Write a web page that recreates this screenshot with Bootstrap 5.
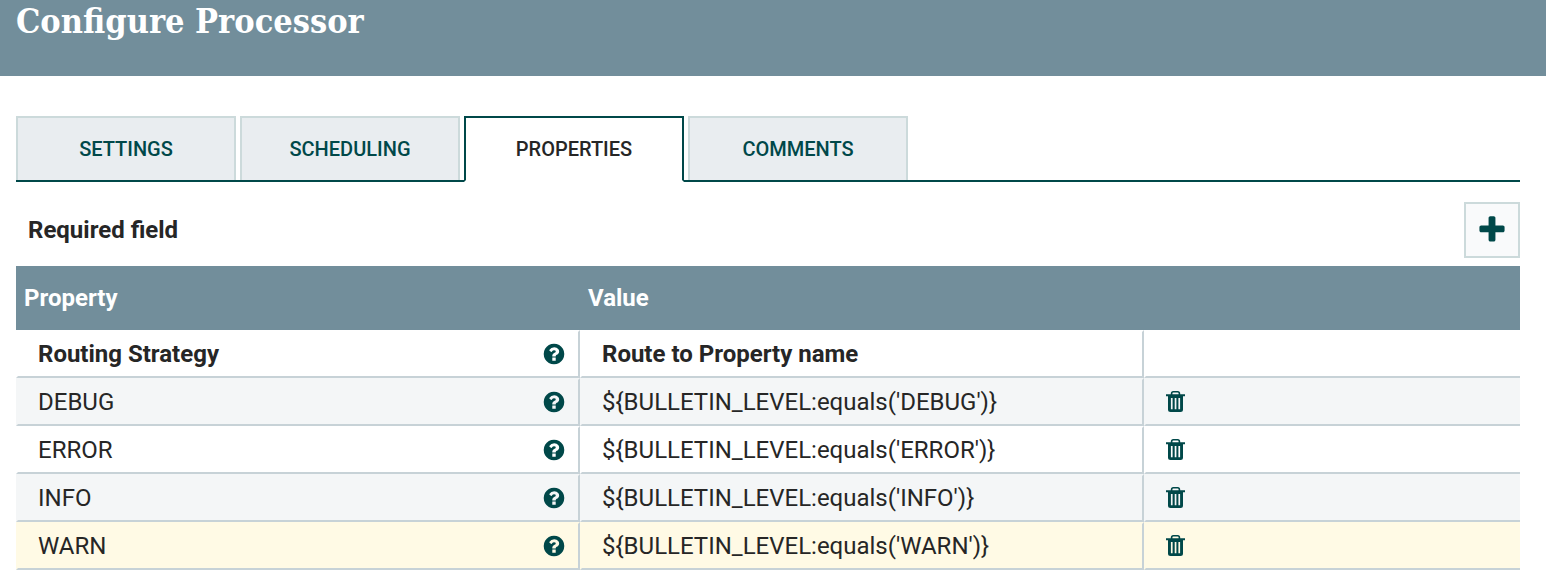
<!DOCTYPE html>
<html lang="en">
<head>
<meta charset="utf-8">
<meta name="viewport" content="width=device-width, initial-scale=1">
<title>Configure Processor</title>
<link href="https://cdn.jsdelivr.net/npm/bootstrap@5.3.0/dist/css/bootstrap.min.css" rel="stylesheet">
<style>
  :root { --slate: #728e9b; --teal: #004849; --line: #c7d2d7; --edge: #ccdadb; --ink: #262626; }
  body { font-family: Roboto, "Liberation Sans", sans-serif; font-size: 24px; line-height: 32px; color: var(--ink); background: #fff; }
  .dialog-head { background: var(--slate); height: 76px; }
  .dialog-head h1 { font-family: "Roboto Slab", "DejaVu Serif Condensed", "DejaVu Serif", serif; font-size: 34px; font-weight: 700; line-height: 42px; }
  .dialog-body { padding: 40px 26px 0 16px; }
  .config-tabs { border-bottom: 2px solid var(--teal); gap: 4px; }
  .config-tabs .nav-link { width: 220px; height: 64px; padding: 0; border: 2px solid var(--edge); border-bottom: 0; border-radius: 0; background: #e9edf0; color: var(--teal); font-size: 20px; font-weight: 500; line-height: 62px; }
  .config-tabs .nav-link:hover { border-color: var(--edge); }
  .config-tabs .nav-link.active { height: 66px; margin-bottom: -2px; border-bottom: 2px solid; border-color: var(--teal) var(--teal) #fff; background: #fff; color: var(--ink); }
  .toolbar-row { padding: 20px 0 8px 12px; }
  .add-btn { width: 56px; height: 56px; padding: 0; border: 2px solid var(--edge); border-radius: 0; background: #f9fafb; color: var(--teal); }
  .prop-table { table-layout: fixed; border-collapse: separate; border-spacing: 0; }
  .prop-table th, .prop-table td { text-align: left; vertical-align: middle; }
  .prop-table thead th { height: 64px; padding: 0 8px; background: var(--slate); color: #fff; font-weight: 700; }
  .prop-table tbody td { height: 48px; padding: 0 12px 0 20px; border: 2px solid transparent; border-right-color: var(--line); border-bottom-color: var(--line); }
  .prop-table tbody td:last-child { padding-left: 18px; border-right: 0; }
  .prop-table tbody tr:nth-child(even) { background: #f4f6f7; }
  .prop-table tbody tr.picked { background: #fffae5; }
  .col-wide { width: 37.5%; }
  .icon-btn { display: block; padding: 0; border: 0; background: none; color: var(--teal); }
  svg { display: block; fill: currentColor; }
</style>
</head>
<body>
<svg class="d-none" aria-hidden="true">
  <symbol id="help" viewBox="0 0 1792 1792"><path d="M1024 1376v-192q0-14-9-23t-23-9h-192q-14 0-23 9t-9 23v192q0 14 9 23t23 9h192q14 0 23-9t9-23zm256-672q0-88-55.500-163t-138.500-116-170-41q-243 0-371 213-15 24 8 42l132 100q7 6 19 6 16 0 25-12 53-68 86-92 34-24 86-24 48 0 85.500 26t37.500 59q0 38-20 61t-68 45q-63 28-115.500 86.500t-52.500 125.500v36q0 14 9 23t23 9h192q14 0 23-9t9-23q0-19 21.500-49.500t54.500-49.500q32-18 49-28.500t46-35 44.500-48 28-60.500 12.500-81zm384 192q0 209-103 385.500t-279.500 279.500-385.500 103-385.500-103-279.500-279.500-103-385.500 103-385.500 279.500-279.500 385.500-103 385.500 103 279.500 279.500 103 385.500z"/></symbol>
  <symbol id="trash" viewBox="0 0 24 24"><path fill-rule="evenodd" d="M2 4.300H6.800V3.500Q6.800 1 9.300 1h4.400Q16.200 1 16.200 3.500V4.300H21V6.200H19V19.500Q19 22 16.500 22H6.500Q4 22 4 19.500V6.200H2zM8.400 4.300h6.200V3.600q0-1-1-1H9.400q-1 0-1 1zM6.900 8h1.700v11.300H6.900zM10.700 8h1.700v11.300h-1.700zM14.400 8h1.700v11.300h-1.700z"/></symbol>
</svg>
<header class="dialog-head px-3"><h1 class="m-0 text-white">Configure Processor</h1></header>
<main class="dialog-body">
  <ul class="nav config-tabs" role="tablist">
    <li class="nav-item" role="presentation"><button class="nav-link" type="button" role="tab" aria-selected="false">SETTINGS</button></li>
    <li class="nav-item" role="presentation"><button class="nav-link" type="button" role="tab" aria-selected="false">SCHEDULING</button></li>
    <li class="nav-item" role="presentation"><button class="nav-link active" type="button" role="tab" aria-selected="true">PROPERTIES</button></li>
    <li class="nav-item" role="presentation"><button class="nav-link" type="button" role="tab" aria-selected="false">COMMENTS</button></li>
  </ul>
  <div class="toolbar-row d-flex align-items-center justify-content-between">
    <span class="fw-bold">Required field</span>
    <button class="btn add-btn d-flex align-items-center justify-content-center" type="button" aria-label="Add property">
      <svg width="32" height="32" viewBox="0 0 1792 1792" aria-hidden="true"><path d="M1600 736v192q0 40-28 68t-68 28h-416v416q0 40-28 68t-68 28h-192q-40 0-68-28t-28-68v-416h-416q-40 0-68-28t-28-68v-192q0-40 28-68t68-28h416v-416q0-40 28-68t68-28h192q40 0 68 28t28 68v416h416q40 0 68 28t28 68z"/></svg>
    </button>
  </div>
  <table class="prop-table w-100">
    <thead><tr><th class="col-wide" scope="col">Property</th><th class="col-wide" scope="col">Value</th><th aria-label="Actions"></th></tr></thead>
    <tbody>
      <tr class="fw-bold"><td><div class="d-flex align-items-center justify-content-between">Routing Strategy<button class="icon-btn" type="button" aria-label="Help"><svg width="24" height="24"><use href="#help"/></svg></button></div></td><td>Route to Property name</td><td></td></tr>
      <tr><td><div class="d-flex align-items-center justify-content-between">DEBUG<button class="icon-btn" type="button" aria-label="Help"><svg width="24" height="24"><use href="#help"/></svg></button></div></td><td>${BULLETIN_LEVEL:equals('DEBUG')}</td><td><button class="icon-btn" type="button" aria-label="Delete"><svg width="24" height="24"><use href="#trash"/></svg></button></td></tr>
      <tr><td><div class="d-flex align-items-center justify-content-between">ERROR<button class="icon-btn" type="button" aria-label="Help"><svg width="24" height="24"><use href="#help"/></svg></button></div></td><td>${BULLETIN_LEVEL:equals('ERROR')}</td><td><button class="icon-btn" type="button" aria-label="Delete"><svg width="24" height="24"><use href="#trash"/></svg></button></td></tr>
      <tr><td><div class="d-flex align-items-center justify-content-between">INFO<button class="icon-btn" type="button" aria-label="Help"><svg width="24" height="24"><use href="#help"/></svg></button></div></td><td>${BULLETIN_LEVEL:equals('INFO')}</td><td><button class="icon-btn" type="button" aria-label="Delete"><svg width="24" height="24"><use href="#trash"/></svg></button></td></tr>
      <tr class="picked"><td><div class="d-flex align-items-center justify-content-between">WARN<button class="icon-btn" type="button" aria-label="Help"><svg width="24" height="24"><use href="#help"/></svg></button></div></td><td>${BULLETIN_LEVEL:equals('WARN')}</td><td><button class="icon-btn" type="button" aria-label="Delete"><svg width="24" height="24"><use href="#trash"/></svg></button></td></tr>
    </tbody>
  </table>
</main>
<script src="https://cdn.jsdelivr.net/npm/bootstrap@5.3.0/dist/js/bootstrap.bundle.min.js"></script>
</body>
</html>
